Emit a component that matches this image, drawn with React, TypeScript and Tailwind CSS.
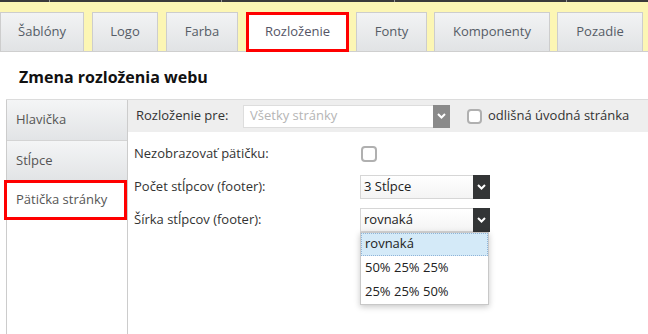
import React from "react";

const Chevron = ({ color = "#fff" }: { color?: string }) => (
  <svg width="9" height="6" viewBox="0 0 9 6">
    <path d="M1 1 L4.5 4.5 L8 1" fill="none" stroke={color} strokeWidth="2" />
  </svg>
);

const tabs = [
  { label: "Šablóny", w: "w-[84px]", mr: "mr-[8px]" },
  { label: "Logo", w: "w-[66px]", mr: "mr-[8px]" },
  { label: "Farba", w: "w-[72px]", mr: "mr-[8px]" },
  { label: "Rozloženie", w: "w-[103px]", mr: "mr-[7px]", active: true },
  { label: "Fonty", w: "w-[71px]", mr: "mr-[7px]" },
  { label: "Komponenty", w: "w-[116px]", mr: "mr-[7px]" },
  { label: "Pozadie", w: "w-[86px]", mr: "mr-[7px]" },
];

export default function App() {
  return (
    <div
      className="w-[648px] h-[334px] overflow-hidden bg-white text-[13px] text-[#333] flex flex-col"
      style={{ fontFamily: "'Open Sans', 'Noto Sans', sans-serif" }}
    >
      {/* top dark strip */}
      <div className="h-[2px] bg-[#3a3a3a] flex shrink-0">
        <div className="w-[49px]" />
        <div className="w-[1px] bg-[#999]" />
        <div className="w-[171px]" />
        <div className="w-[1px] bg-[#999]" />
        <div className="w-[172px]" />
        <div className="w-[1px] bg-[#999]" />
        <div className="w-[171px]" />
        <div className="w-[1px] bg-[#999]" />
      </div>
      {/* tabs */}
      <div className="h-[50px] bg-[#fcf6b4] border-b border-[#cfcfcf] flex items-end pt-[10px] shrink-0">
        {tabs.map((t) =>
          t.active ? (
            <div
              key={t.label}
              className={`${t.w} ${t.mr} h-[40px] -mb-[1px] bg-white border-[3px] border-[#ff0000] flex items-center justify-center text-[#556] shrink-0`}
            >
              {t.label}
            </div>
          ) : (
            <div
              key={t.label}
              className={`${t.w} ${t.mr} h-[39px] bg-gradient-to-b from-[#f2f3f4] to-[#e1e3e5] border border-b-0 border-[#cdcdcd] flex items-center justify-center text-[#555c66] shrink-0`}
            >
              {t.label}
            </div>
          )
        )}
      </div>
      {/* title */}
      <div className="h-[47px] pl-[19px] pt-[14px] shrink-0">
        <h1 className="text-[16px] font-bold text-[#111] leading-[22px]">Zmena rozloženia webu</h1>
      </div>
      {/* body */}
      <div className="flex-1 ml-[6px] border-t border-[#dcdcdc] flex">
        {/* sidebar */}
        <div className="w-[122px] border-l border-r border-[#cccccc] flex flex-col shrink-0">
          <div className="h-[41px] bg-gradient-to-b from-[#f4f5f6] to-[#e2e4e6] border-b border-[#d4d4d4] flex items-center pl-[9px] text-[#555]">
            Hlavička
          </div>
          <div className="h-[39px] bg-gradient-to-b from-[#f4f5f6] to-[#e2e4e6] flex items-center pl-[9px] text-[#555]">
            Stĺpce
          </div>
          <div className="h-[40px] -ml-[3px] w-[123px] bg-white border-[3px] border-[#ff0000] flex items-center pl-[9px] text-[#555]">
            Pätička stránky
          </div>
        </div>
        {/* content */}
        <div className="flex-1 flex flex-col">
          <div className="h-[32px] bg-[#eeeeee] flex items-center pl-[8px]">
            <span className="w-[107px]">Rozloženie pre:</span>
            <div className="w-[207px] h-[23px] bg-white border border-[#dddddd] flex items-center">
              <span className="flex-1 pl-[6px] text-[#b5b5b5]">Všetky stránky</span>
              <div className="w-[17px] h-[23px] -mr-[1px] bg-[#8a8a8a] flex items-center justify-center">
                <Chevron />
              </div>
            </div>
            <div className="ml-[17px] w-[15px] h-[15px] rounded-[4px] border-2 border-[#b0b0b0] bg-white" />
            <span className="ml-[6px]">odlišná úvodná stránka</span>
          </div>
          <div className="pt-[5px] pl-[6px] flex flex-col">
            <div className="h-[33px] flex items-center">
              <span className="w-[226px]">Nezobrazovať pätičku:</span>
              <div className="ml-[1px] w-[16px] h-[16px] rounded-[4px] border-2 border-[#b0b0b0] bg-white" />
            </div>
            <div className="h-[33px] flex items-center">
              <span className="w-[226px]">Počet stĺpcov (footer):</span>
              <div className="w-[130px] h-[24px] bg-gradient-to-b from-white to-[#f4f4f4] border border-[#d6d6d6] flex items-center">
                <span className="flex-1 pl-[3px] text-[#222]">3 Stĺpce</span>
                <div className="w-[17px] h-[24px] -mr-[1px] bg-[#333536] flex items-center justify-center">
                  <Chevron />
                </div>
              </div>
            </div>
            <div className="h-[33px] flex items-center">
              <span className="w-[226px]">Šírka stĺpcov (footer):</span>
              <div className="relative w-[130px] h-[24px] bg-gradient-to-b from-white to-[#f4f4f4] border border-[#d6d6d6] flex items-center">
                <span className="flex-1 pl-[3px] text-[#222]">rovnaká</span>
                <div className="w-[17px] h-[24px] -mr-[1px] bg-[#333536] flex items-center justify-center">
                  <Chevron />
                </div>
                <div className="absolute left-[-1px] top-[23px] w-[129px] bg-white border border-[#c8c8c8] shadow-[0_2px_6px_rgba(0,0,0,0.22)] flex flex-col">
                  <div className="h-[23px] bg-[#d4eaf8] border border-dotted border-[#8fb4d8] flex items-center pl-[3px] text-[#222]">
                    rovnaká
                  </div>
                  <div className="h-[24px] flex items-center pl-[4px] text-[#222]">50% 25% 25%</div>
                  <div className="h-[24px] flex items-center pl-[4px] text-[#222]">25% 25% 50%</div>
                </div>
              </div>
            </div>
          </div>
        </div>
      </div>
    </div>
  );
}
